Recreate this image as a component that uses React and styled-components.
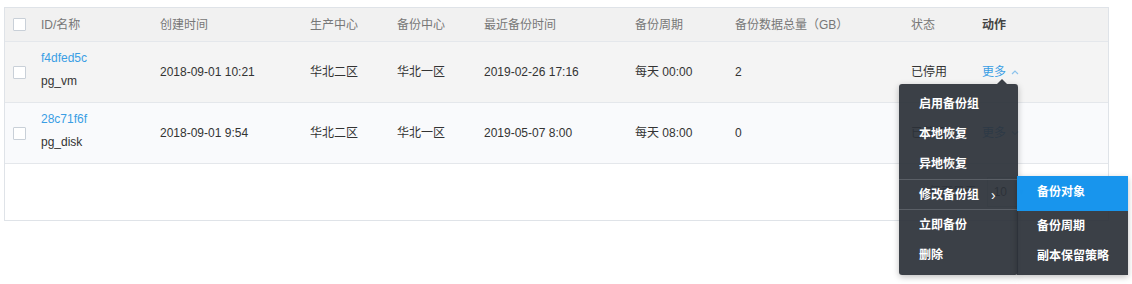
import React from 'react';
import styled, { createGlobalStyle } from 'styled-components';

const Global = createGlobalStyle`
  html {
    overflow: hidden;
  }
  body {
    margin: 0;
    padding: 0;
    background: #ffffff;
    font-family: "Liberation Sans", "Noto Sans CJK SC", sans-serif;
    font-size: 12px;
    line-height: 16px;
    color: #333;
  }
`;

const Page = styled.div`
  padding: 7px 0 0 4px;
  width: 1109px;
  min-height: 284px;
  box-sizing: border-box;
`;

const Table = styled.div`
  border: 1px solid #dfe3e8;
  background: #fff;
`;

const cols = '36px 119px 150px 87px 87px 151px 100px 176px 71px 1fr';

const Row = styled.div`
  display: grid;
  grid-template-columns: ${cols};
  align-items: center;
  height: ${(p) => p.$h}px;
  background: ${(p) => p.$bg};
  border-bottom: 1px solid #e4e7eb;
  box-sizing: border-box;
`;

const Head = styled.div`
  color: ${(p) => (p.$strong ? '#444' : '#777')};
  font-weight: ${(p) => (p.$strong ? 700 : 400)};
`;

const Cell = styled.div`
  color: #333;
  position: relative;
  height: 16px;
`;

const CheckCell = styled.div`
  padding-left: 8px;
  display: flex;
  align-items: center;
`;

const Check = styled.span`
  width: 11px;
  height: 11px;
  border: 1px solid #c9d0d8;
  border-radius: 1px;
  background: #fff;
  display: block;
`;

const IdCell = styled.div`
  display: flex;
  flex-direction: column;
  gap: 7px;
  margin-top: -5px;
`;

const IdLink = styled.span`
  color: #3a9ee4;
`;

const More = styled.span`
  color: #3a9ee4;
  display: inline-flex;
  align-items: center;
  gap: 5px;
`;

const Pager = styled.div`
  height: 56px;
  display: flex;
  align-items: center;
  justify-content: flex-end;
  padding-right: 16px;
  gap: 10px;
  color: #555;
`;

const Select = styled.div`
  width: 46px;
  height: 30px;
  border: 1px solid #d6dbe1;
  box-sizing: border-box;
  display: flex;
  align-items: center;
  justify-content: space-between;
  padding: 0 6px;
  color: #333;
`;

const menuBg = 'rgba(44, 49, 57, 0.93)';

const Menu = styled.div`
  position: absolute;
  left: -83px;
  top: 20px;
  width: 119px;
  padding: 5px 0 5px;
  background: ${menuBg};
  border-radius: 3px;
  box-shadow: 0 2px 6px rgba(0, 0, 0, 0.25);
  z-index: 10;
  &::before {
    content: '';
    position: absolute;
    top: -5px;
    left: 98px;
    border-left: 5px solid transparent;
    border-right: 5px solid transparent;
    border-bottom: 5px solid ${menuBg};
  }
`;

const Item = styled.div`
  position: relative;
  height: ${(p) => p.$h || 30}px;
  box-sizing: border-box;
  display: flex;
  align-items: center;
  padding-left: 20px;
  padding-bottom: ${(p) => (p.$active ? 3 : 0)}px;
  color: #fff;
  font-weight: 700;
  background: ${(p) => (p.$active ? 'rgba(22, 156, 250, 0.93)' : 'transparent')};
  border-top: ${(p) => (p.$sepTop ? '1px solid #5a5f66' : 'none')};
  border-bottom: ${(p) => (p.$sepBottom ? '1px solid #5a5f66' : 'none')};
`;

const Arrow = styled.span`
  margin-left: 12px;
  font-weight: 400;
  font-size: 14px;
`;

const SubMenu = styled.div`
  position: absolute;
  left: 118px;
  top: -4px;
  width: 111px;
  background: ${menuBg};
  padding-bottom: 4px;
  box-shadow: 0 2px 6px rgba(0, 0, 0, 0.25);
`;

function Chevron({ up }) {
  return (
    <svg width="8" height="6" viewBox="0 0 8 6">
      <path
        d={up ? 'M1 5 L4 2 L7 5' : 'M1 1.5 L4 4.5 L7 1.5'}
        fill="none"
        stroke="#8cc3ec"
        strokeWidth="1.2"
      />
    </svg>
  );
}

const headers = ['ID/名称', '创建时间', '生产中心', '备份中心', '最近备份时间', '备份周期', '备份数据总量（GB）', '状态'];

const rows = [
  { id: 'f4dfed5c', name: 'pg_vm', created: '2018-09-01 10:21', prod: '华北二区', backup: '华北一区', last: '2019-02-26 17:16', cycle: '每天 00:00', total: '2', status: '已停用', bg: '#f4f4f4', open: true },
  { id: '28c71f6f', name: 'pg_disk', created: '2018-09-01 9:54', prod: '华北二区', backup: '华北一区', last: '2019-05-07 8:00', cycle: '每天 08:00', total: '0', status: '已停用', bg: '#f9fafc' },
];

function ActionMenu() {
  return (
    <Menu>
      <Item>启用备份组</Item>
      <Item>本地恢复</Item>
      <Item>异地恢复</Item>
      <Item $sepTop $sepBottom $h={31}>
        修改备份组<Arrow>›</Arrow>
        <SubMenu>
          <Item $active $h={35}>备份对象</Item>
          <Item>备份周期</Item>
          <Item>副本保留策略</Item>
        </SubMenu>
      </Item>
      <Item>立即备份</Item>
      <Item>删除</Item>
    </Menu>
  );
}

export default function App() {
  return (
    <>
      <Global />
      <Page>
        <Table>
          <Row $h={34} $bg="#f1f1f1">
            <CheckCell><Check /></CheckCell>
            {headers.map((h) => (
              <Head key={h}>{h}</Head>
            ))}
            <Head $strong>动作</Head>
          </Row>
          {rows.map((r) => (
            <Row key={r.id} $h={61} $bg={r.bg}>
              <CheckCell><Check /></CheckCell>
              <IdCell>
                <IdLink>{r.id}</IdLink>
                <span>{r.name}</span>
              </IdCell>
              <Cell>{r.created}</Cell>
              <Cell>{r.prod}</Cell>
              <Cell>{r.backup}</Cell>
              <Cell>{r.last}</Cell>
              <Cell>{r.cycle}</Cell>
              <Cell>{r.total}</Cell>
              <Cell>{r.status}</Cell>
              <Cell>
                <More>更多<Chevron up={r.open} /></More>
                {r.open && <ActionMenu />}
              </Cell>
            </Row>
          ))}
          <Pager>
            <span>每页显示</span>
            <Select><span>10</span><span style={{ fontSize: 9 }}>▼</span></Select>
            <span>共计 2 条</span>
          </Pager>
        </Table>
      </Page>
    </>
  );
}
